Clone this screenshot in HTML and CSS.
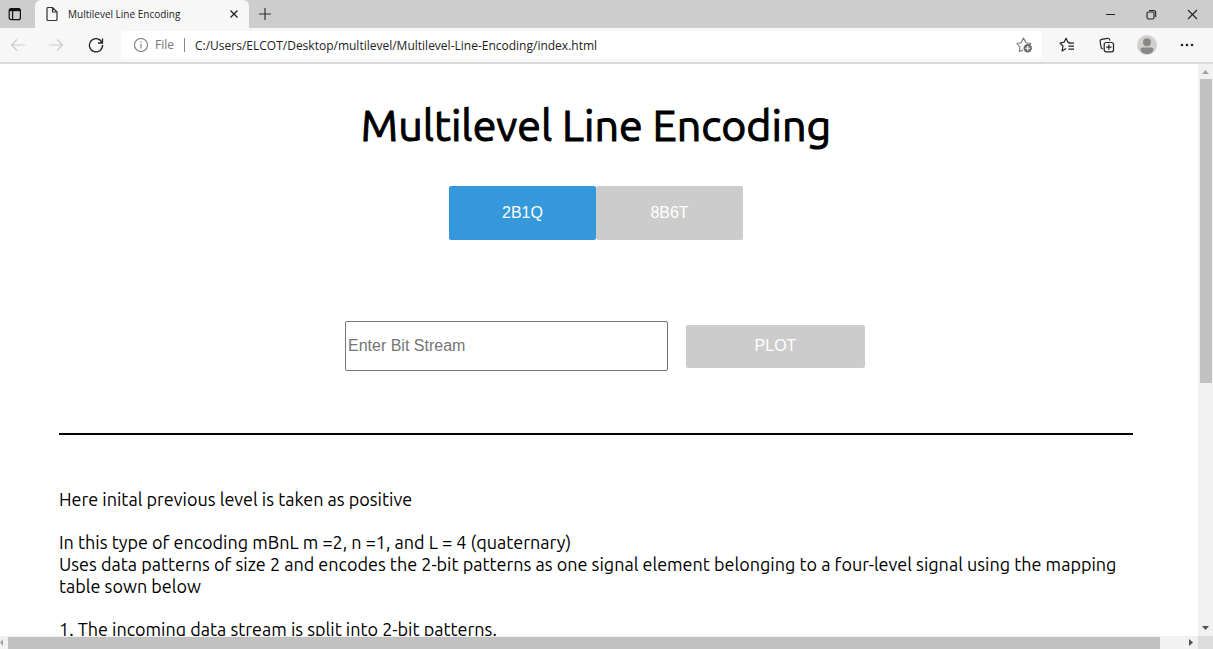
FILE: index.html
```html
<!DOCTYPE html>
<html lang="en">
<head>
<meta charset="utf-8">
<title>Multilevel Line Encoding</title>
<link rel="stylesheet" href="styles.css">
</head>
<body>
<header class="browser">
  <div class="tabs">
    <button class="icon-btn tab-menu" aria-label="Tab actions"><svg width="14" height="14" viewBox="0 0 14 14" fill="none" stroke="#111" stroke-width="1.2"><rect x="1.2" y="1.700" width="11.200" height="11" rx="2"/><path d="M1.500 3h10.600" stroke-width="2.400"/><path d="M4.600 4v8.500"/></svg></button>
    <div class="tab">
      <svg width="14" height="16" viewBox="0 0 14 16" fill="none" stroke="#333" stroke-width="1.2" stroke-linejoin="round"><path d="M3 1.500h4.500L12 6v7.500a1 1 0 0 1-1 1H3a1 1 0 0 1-1-1v-11a1 1 0 0 1 1-1zM7.500 1.500V6H12"/></svg>
      <span class="tab-title">Multilevel Line Encoding</span>
      <button class="icon-btn tab-close" aria-label="Close tab"><svg width="10" height="10" viewBox="0 0 10 10" stroke="#222" stroke-width="1.300"><path d="M1.500 1.500l7 7M8.500 1.500l-7 7"/></svg></button>
    </div>
    <button class="icon-btn new-tab" aria-label="New tab"><svg width="14" height="14" viewBox="0 0 14 14" stroke="#333" stroke-width="1.200"><path d="M7 1v12M1 7h12"/></svg></button>
    <div class="window-controls">
      <button class="icon-btn" aria-label="Minimize"><svg width="11" height="11" viewBox="0 0 11 11" stroke="#222"><path d="M1 5.500h9"/></svg></button>
      <button class="icon-btn" aria-label="Restore"><svg width="11" height="11" viewBox="0 0 11 11" fill="none" stroke="#222" stroke-width="1.100"><rect x="1" y="3" width="7" height="7" rx="1.500"/><path d="M3 1.500h4.500a2.200 2.200 0 0 1 2.200 2.200V8"/></svg></button>
      <button class="icon-btn" aria-label="Close"><svg width="11" height="11" viewBox="0 0 11 11" stroke="#222" stroke-width="1.100"><path d="M1 1l9 9M10 1l-9 9"/></svg></button>
    </div>
  </div>
  <div class="toolbar">
    <div class="nav">
      <button class="icon-btn" aria-label="Back" disabled><svg width="16" height="14" viewBox="0 0 16 14" fill="none" stroke="#ccc" stroke-width="1.200"><path d="M15 7H1.500M7 1.500L1.500 7 7 12.500"/></svg></button>
      <button class="icon-btn" aria-label="Forward" disabled><svg width="16" height="14" viewBox="0 0 16 14" fill="none" stroke="#ccc" stroke-width="1.200"><path d="M1 7h13.500M9 1.500L14.500 7 9 12.500"/></svg></button>
      <button class="icon-btn" aria-label="Refresh"><svg width="16" height="16" viewBox="0 0 16 16" fill="none" stroke="#222" stroke-width="1.300"><path d="M14.200 6A6.600 6.600 0 1 0 14.600 8M14.500 1.500V6H10"/></svg></button>
    </div>
    <div class="address">
      <svg width="16" height="16" viewBox="0 0 16 16" fill="none" stroke="#777" stroke-width="1.100"><circle cx="8" cy="8" r="6.500"/><path d="M8 7v4.500M8 4.500v1.200"/></svg>
      <label class="scheme" for="url">File</label>
      <input id="url" class="url" type="text" value="C:/Users/ELCOT/Desktop/multilevel/Multilevel-Line-Encoding/index.html">
      <button class="icon-btn" aria-label="Add to favorites"><svg width="17" height="16" viewBox="0 0 17 16" fill="none" stroke="#777" stroke-width="1.100" stroke-linejoin="round"><path d="M7 13l-3.600 1.500.5-4.500L1 6.500l4-.8L7.500 1l2.300 4.700 5 .8-2 2"/><circle cx="11.700" cy="11.300" r="4.200" fill="#707070" stroke="none"/><path d="M11.700 9v4.600M9.400 11.300H14" stroke="#fff"/></svg></button>
    </div>
    <div class="actions">
      <button class="icon-btn" aria-label="Favorites"><svg width="16" height="16" viewBox="0 0 16 16" fill="none" stroke="#222" stroke-width="1.200" stroke-linejoin="round"><path d="M11 5.500L8.900 5.200 7.100 1.200 5.100 5.200 1 6l3 3-.9 5L7 11.500M9.500 6.200H15M9.500 9.200H15M9.500 12.200H15"/></svg></button>
      <button class="icon-btn" aria-label="Collections"><svg width="16" height="16" viewBox="0 0 16 16" fill="none" stroke="#222" stroke-width="1.200"><rect x="5.200" y="5.500" width="9.300" height="9.300" rx="2"/><path d="M9.900 7.500v5.300M7.200 10.200h5.300M3.800 12L2.300 11 1.100 4.500a2 2 0 0 1 1.400-2.100l6-1.100a2 2 0 0 1 2.200 1.400l.2 1"/></svg></button>
      <button class="icon-btn" aria-label="Profile"><svg width="20" height="20" viewBox="0 0 20 20"><circle cx="10" cy="10" r="10" fill="#d2d0ce"/><circle cx="10" cy="7.300" r="4" fill="#8a8886"/><path d="M3.500 14q0-1.500 2-1.500h9q2 0 2 1.500c0 3-3 5-6.500 5s-6.500-2-6.500-5z" fill="#8a8886"/></svg></button>
      <button class="icon-btn" aria-label="Settings and more"><svg width="14" height="4" viewBox="0 0 14 4" fill="#222"><circle cx="2" cy="2" r="1.300"/><circle cx="7" cy="2" r="1.300"/><circle cx="12" cy="2" r="1.300"/></svg></button>
    </div>
  </div>
</header>
<div class="viewport">
  <main class="page">
    <h1 class="title">Multilevel Line Encoding</h1>
    <div class="schemes">
      <button class="btn scheme-btn active">2B1Q</button>
      <button class="btn scheme-btn">8B6T</button>
    </div>
    <form class="stream-form">
      <input class="stream" type="text" placeholder="Enter Bit Stream" aria-label="Enter Bit Stream">
      <button class="btn plot" type="button">PLOT</button>
    </form>
    <hr class="rule">
    <section class="notes">
      <p>Here inital previous level is taken as positive</p>
      <p>In this type of encoding mBnL m =2, n =1, and L = 4 (quaternary)<br>Uses data patterns of size 2 and encodes the 2-bit patterns as one signal element belonging to a four-level signal using the mapping table sown below</p>
      <p>1. The incoming data stream is split into 2-bit patterns.</p>
    </section>
  </main>
  <div class="scroll-v" aria-hidden="true">
    <svg width="7" height="4" viewBox="0 0 7 4" fill="#a3a3a3"><path d="M0 4L3.500 0 7 4z"/></svg>
    <div class="track-v"><div class="thumb-v"></div></div>
    <svg width="7" height="4" viewBox="0 0 7 4" fill="#505050"><path d="M0 0h7L3.500 4z"/></svg>
  </div>
  <div class="scroll-h" aria-hidden="true">
    <svg width="3" height="7" viewBox="0 0 3 7" fill="#a3a3a3"><path d="M3 0v7L0 3.500z"/></svg>
    <div class="track-h"><div class="thumb-h"></div></div>
    <svg width="4" height="7" viewBox="0 0 4 7" fill="#505050"><path d="M0 0v7l4-3.500z"/></svg>
  </div>
  <div class="corner"></div>
</div>
</body>
</html>
```
FILE: styles.css
```css
* { box-sizing: border-box; }
body {
  margin: 0;
  height: 100vh;
  display: flex;
  flex-direction: column;
  overflow: hidden;
  background: #fff;
  color: #000;
  font-family: Ubuntu, "Noto Sans", sans-serif;
}
svg { display: block; flex: none; }
button { font: inherit; border: 0; padding: 0; }

.browser {
  flex: none;
  background: #f7f7f7;
  border-bottom: 2px solid #dadada;
  font-family: "Segoe UI", "Open Sans", sans-serif;
}
.icon-btn {
  display: flex;
  align-items: center;
  justify-content: center;
  background: none;
}
.tabs {
  display: flex;
  height: 28px;
  background: #cdcdcd;
}
.tab-menu { width: 35px; padding-right: 6px; }
.tab {
  display: flex;
  align-items: center;
  width: 214px;
  padding: 0 10px;
  border-radius: 6px 6px 0 0;
  background: #f7f7f7;
}
.tab-title {
  flex: 1;
  margin-left: 9px;
  font-size: 10px;
  color: #222;
  white-space: nowrap;
}
.new-tab { width: 32px; }
.window-controls { display: flex; margin-left: auto; }
.window-controls .icon-btn { width: 41px; }

.toolbar {
  display: flex;
  align-items: center;
  height: 34px;
}
.nav { display: flex; }
.nav .icon-btn { width: 40px; }
.nav .icon-btn:first-child { width: 36px; }
.address {
  flex: 1;
  display: flex;
  align-items: center;
  height: 28px;
  margin-left: 5px;
  padding: 0 9px 0 12px;
  border-radius: 4px;
  background: #fff;
}
.scheme {
  margin-left: 6px;
  padding-right: 10px;
  border-right: 1px solid #888;
  font-size: 12px;
  line-height: 14px;
  color: #767676;
}
.url {
  flex: 1;
  min-width: 0;
  margin-left: 10px;
  padding: 0;
  border: 0;
  background: none;
  font: inherit;
  font-size: 12px;
  color: #222;
}
.actions { display: flex; padding: 0 6px 0 5px; }
.actions .icon-btn { width: 40px; }

.viewport {
  flex: 1;
  min-height: 0;
  display: grid;
  grid-template: minmax(0, 1fr) 13px / minmax(0, 1fr) 15px;
}
.page {
  overflow: hidden;
  padding: 32px 65px 0 59px;
}
.title {
  margin: 0;
  font-size: 43px;
  font-weight: 400;
  -webkit-text-stroke: 1px #000;
  line-height: 58px;
  text-align: center;
}
.schemes {
  display: flex;
  justify-content: center;
  margin-top: 32px;
}
.btn {
  border-radius: 2px;
  background: #ccc;
  color: #fff;
  font-family: Arial, "Liberation Sans", sans-serif;
  font-size: 16px;
}
.scheme-btn { width: 147px; height: 54px; }
.active { background: #3498db; }
.stream-form {
  display: flex;
  align-items: center;
  justify-content: center;
  gap: 18px;
  margin-top: 81px;
  padding-left: 18px;
}
.stream {
  width: 323px;
  height: 50px;
  padding: 0 2px;
  border: 1px solid #767676;
  border-radius: 2px;
  font-family: Arial, "Liberation Sans", sans-serif;
  font-size: 16px;
}
.stream::placeholder { color: #757575; }
.plot { width: 179px; height: 43px; }
.rule {
  margin: 62px 0 0;
  border: 0;
  border-top: 2px solid #000;
}
.notes {
  margin-top: 53px;
  font-size: 18px;
  line-height: 22px;
}
.notes p { margin: 0 0 21px; }

.scroll-v, .scroll-h {
  display: flex;
  align-items: center;
  background: #f1f1f1;
}
.scroll-v { flex-direction: column; padding: 6px 0; gap: 5px; }
.track-v { flex: 1; width: 12px; }
.thumb-v { height: 56%; background: #c1c1c1; }
.scroll-h { padding-right: 5px; gap: 5px; }
.track-h { flex: 1; align-self: stretch; padding-top: 1px; }
.thumb-h { width: 98%; height: 100%; background: #c1c1c1; }
.corner { background: #dcdcdc; }
```
